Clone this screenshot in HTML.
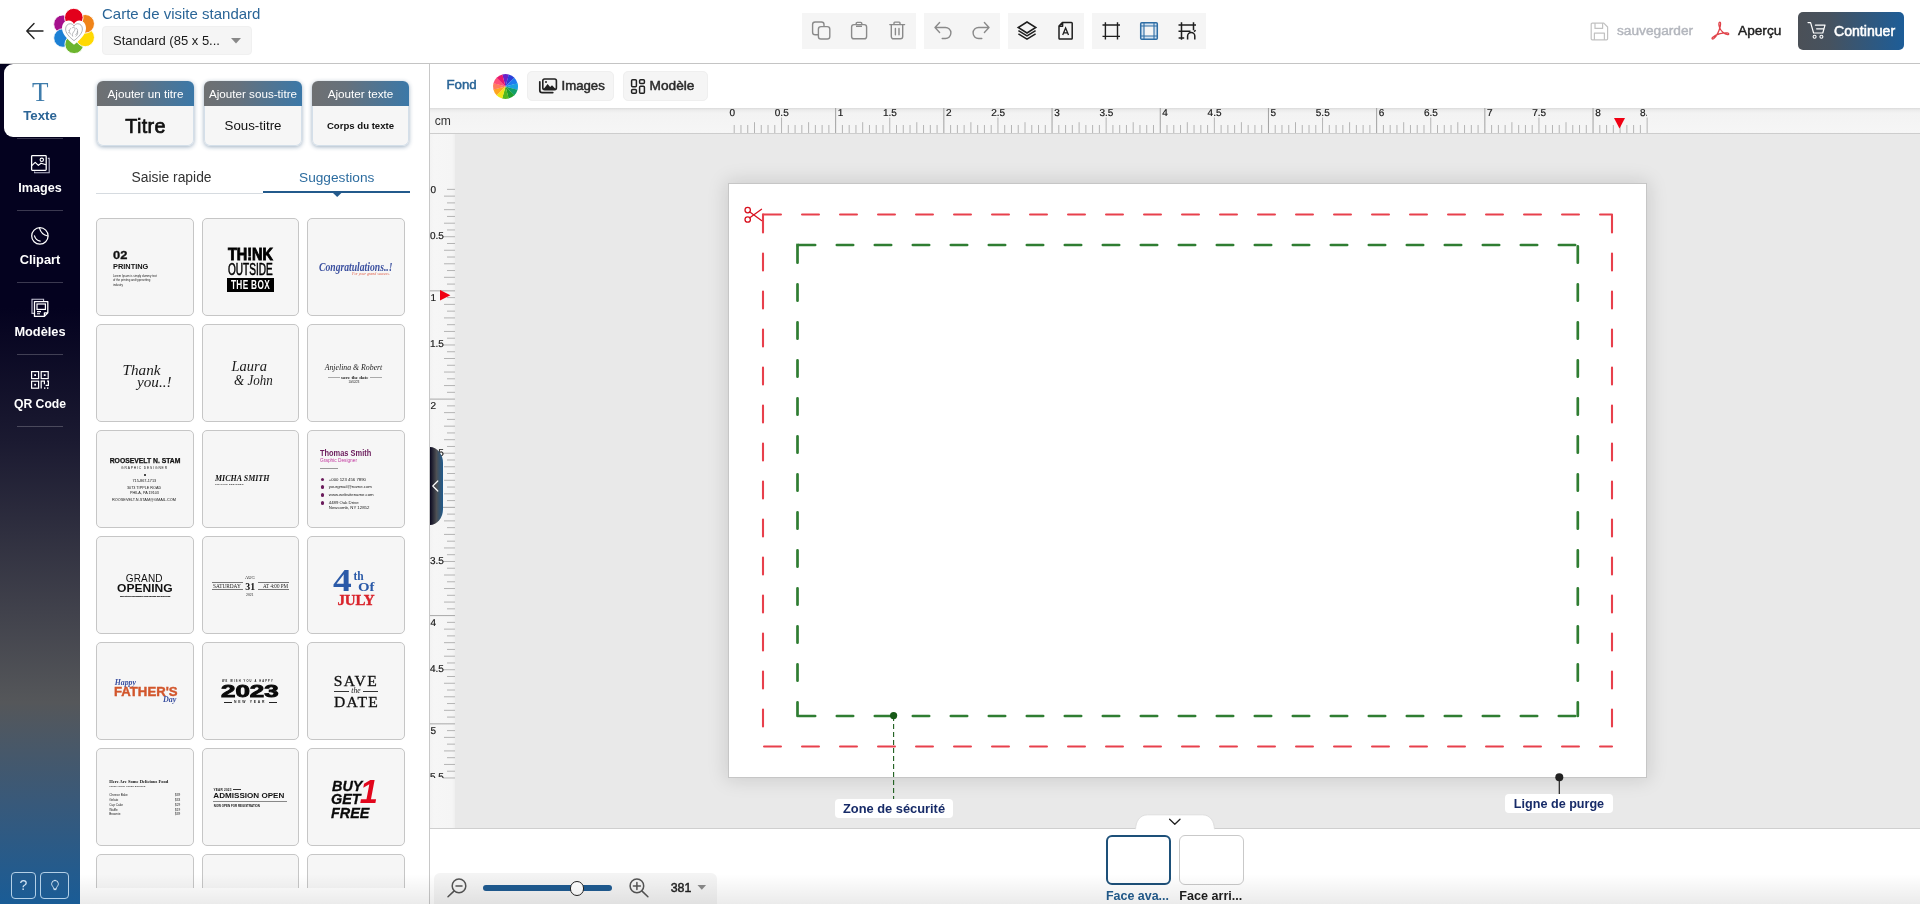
<!DOCTYPE html>
<html lang="fr"><head><meta charset="utf-8"><title>Carte de visite standard</title>
<style>
*{box-sizing:border-box;margin:0;padding:0}
html,body{width:1920px;height:904px;overflow:hidden;background:#fff}
body{font-family:"Liberation Sans",sans-serif;color:#222;position:relative;font-size:14px;will-change:transform}
.abs{position:absolute}
.t{position:absolute;white-space:nowrap;line-height:1}
svg{position:absolute;overflow:visible}
/* header */
#hdr{position:absolute;left:0;top:0;width:1920px;height:64px;background:#fff;border-bottom:1px solid #c4c4c4}
.grp{position:absolute;top:13px;height:36px;background:#f5f5f5}
/* sidebar */
#side{position:absolute;left:0;top:64px;width:80px;height:840px;background:linear-gradient(to bottom,#04021f 0%,#04021f 29%,#1b1a31 45%,#55575a 76%,#38597a 88%,#1a5c96 100%)}
#side .act{position:absolute;left:4px;top:0;width:76px;height:73px;background:#fff;border-radius:9px 0 0 9px}
#side .sep{position:absolute;left:17px;width:46px;height:1px;background:rgba(255,255,255,.22)}
#side .lbl{position:absolute;left:0;width:80px;text-align:center;color:#fff;font-weight:bold;font-size:13px;line-height:16px;white-space:nowrap}
.sq{position:absolute;top:808px;height:27px;border:1.200px solid rgba(205,228,246,.85);border-radius:4px;color:#fff}
/* panel */
#panel{position:absolute;left:80px;top:64px;width:350px;height:840px;background:#fff;border-right:1px solid #c8c8c8;overflow:hidden}
.card{position:absolute;top:17px;height:65px;border-radius:6px;background:#f6f6f6;box-shadow:0 1px 4px rgba(40,80,120,.45);overflow:hidden}
.card .h{position:absolute;left:0;top:0;right:0;height:25px;background:linear-gradient(to right,#6e7072 0%,#66717c 35%,#3b78a8 100%);color:#fff;font-size:12px;line-height:25px;text-align:center;white-space:nowrap}
.card .b{position:absolute;left:0;right:0;top:25px;bottom:0;text-align:center;white-space:nowrap;color:#111;border:1px solid #d4dfe9;border-top:none;border-radius:0 0 6px 6px}
.th{position:absolute;width:98px;height:98px;border:1px solid #c6c6c6;border-radius:5px;background:#f6f6f6;overflow:hidden}
.th .t{color:#111}
/* editor */
#tool{position:absolute;left:430px;top:64px;width:1490px;height:44px;background:#fff}
.btn{position:absolute;top:7px;height:30px;background:#f5f5f5;border:1px solid #efefef;border-radius:5px}
#hr{position:absolute;left:430px;top:108px;width:1490px;height:26px;background:linear-gradient(to bottom,#dadada 0,#ebebeb 2px,#f3f3f3 5px,#f6f6f6 100%);border-bottom:1px solid #cdcdcd;overflow:hidden}
#vr{position:absolute;left:430px;top:134px;width:25px;height:694px;background:linear-gradient(to right,#f3f3f3,#f6f6f6 4px,#f5f5f5 22px,#efefef 100%);overflow:hidden}
#cv{position:absolute;left:455px;top:134px;width:1465px;height:694px;background:#e9e9e9;overflow:hidden}
#bot{position:absolute;left:430px;top:828px;width:1490px;height:76px;background:#fff;border-top:1px solid #cfcfcf}
.rl{position:absolute;font-size:10px;line-height:10px;color:#1a1a1a;white-space:nowrap;-webkit-text-stroke:.2px #1a1a1a;text-rendering:geometricPrecision}
.tag{position:absolute;background:#fff;border-radius:4px;color:#172b68;font-weight:bold;font-size:13px;text-align:center;white-space:nowrap}
#fade{position:absolute;left:80px;top:874px;width:1840px;height:30px;background:linear-gradient(to bottom,rgba(0,0,0,0),rgba(0,0,0,.078));pointer-events:none}
</style></head><body>
<div id="hdr"><svg style="left:24px;top:20px" width="22" height="22" viewBox="0 0 22 22"><path d="M19 11H3.2M10 3.5L2.8 11l7.2 7.5" fill="none" stroke="#222" stroke-width="1.4" stroke-linecap="round" stroke-linejoin="round"/></svg><svg style="left:0;top:0" width="110" height="64" viewBox="0 0 110 64"><circle cx="63" cy="24.2" r="9.300" fill="#a5108c" stroke="#fff" stroke-width=".9"/><circle cx="63" cy="38" r="9.300" fill="#1c80d4" stroke="#fff" stroke-width=".9"/><circle cx="74.2" cy="44.3" r="9.300" fill="#6cb52d" stroke="#fff" stroke-width=".9"/><circle cx="85.2" cy="37.4" r="9.300" fill="#ffd902" stroke="#fff" stroke-width=".9"/><circle cx="85.2" cy="23.8" r="9.300" fill="#f08419" stroke="#fff" stroke-width=".9"/><circle cx="73.8" cy="17.6" r="9.300" fill="#e3001b" stroke="#fff" stroke-width=".9"/><path d="M74 44.700C66 38.600 62 33.200 62 28c0-4.400 3-7.500 6.600-7.500 2.400 0 4.400 1.400 5.400 3.600 1-2.200 3-3.600 5.400-3.600 3.600 0 6.600 3.100 6.600 7.500 0 5.200-4 10.600-12 16.700z" fill="#fff"/><g transform="translate(74 32.200) scale(.7) translate(-74 -32.600)"><path d="M74 44.700C66 38.600 62 33.200 62 28c0-4.400 3-7.500 6.600-7.500 2.400 0 4.400 1.400 5.400 3.600 1-2.200 3-3.600 5.400-3.600 3.600 0 6.600 3.100 6.600 7.500 0 5.200-4 10.600-12 16.700z" fill="none" stroke="#8f9398" stroke-width="1"/></g><path d="M70.600 28.400c-1.800 1.600-1.600 4.600.4 6.200M72.200 27.800c2-1.400 3.600.4 2.400 2.600s-3 3.200-2 5.800M76.200 28.200c2.200 1 2 4.400-.6 6.600M77.400 31.400c.8 1.600.2 3.400-1.400 4.800M68.800 30.400l.3.300M68.600 32.600l.3.200" fill="none" stroke="#8f9398" stroke-width=".65" stroke-linecap="round"/></svg><div class="t" id="ttl" style="left:102px;top:6px;font-size:15px;color:#2a6597">Carte de visite standard</div><div class="abs" style="left:102px;top:26px;width:150px;height:29px;background:#f5f5f5;border-radius:4px;border:1px solid #f0f0f0"></div><div class="t" id="std" style="left:113px;top:33.500px;font-size:13px;color:#1a1a1a">Standard (85 x 5...</div><svg style="left:231px;top:38px" width="10" height="6" viewBox="0 0 10 6"><path d="M0 0h10L5 5.600z" fill="#888"/></svg><div class="grp" style="left:802px;width:114px"></div><div class="grp" style="left:924px;width:76px"></div><div class="grp" style="left:1008px;width:76px"></div><div class="grp" style="left:1092px;width:114px"></div><svg style="left:809px;top:19px" width="24" height="24" viewBox="0 0 24 24"><rect x="3.600" y="3" width="11.400" height="12.800" rx="2.600" fill="none" stroke="#8a8a8a" stroke-width="1.400"/><rect x="9.400" y="7.600" width="11.400" height="12.400" rx="2.600" fill="#f5f5f5" stroke="#8a8a8a" stroke-width="1.400"/></svg><svg style="left:847px;top:19px" width="24" height="24" viewBox="0 0 24 24"><rect x="4.600" y="5.600" width="15" height="14.200" rx="2.400" fill="none" stroke="#8a8a8a" stroke-width="1.400"/><path d="M9.200 5.600v-1.200a1 1 0 0 1 1-1h3.600a1 1 0 0 1 1 1v1.200M9 7.300h6" fill="none" stroke="#8a8a8a" stroke-width="1.400"/></svg><svg style="left:885px;top:19px" width="24" height="24" viewBox="0 0 24 24"><path d="M4.800 5.600h14.800M9 5.400V3.900a.8.800 0 0 1 .8-.8h4.400a.8.800 0 0 1 .8.800v1.500M6.300 5.800v11.800a2.200 2.200 0 0 0 2.200 2.200h7a2.200 2.200 0 0 0 2.200-2.200V5.800M10.400 9.400v6.400M14 9.400v6.400" fill="none" stroke="#8a8a8a" stroke-width="1.400" stroke-linecap="round"/></svg><svg style="left:931px;top:19px" width="24" height="24" viewBox="0 0 24 24"><path d="M8.600 3.600L4 8.500l4.600 4.900M4.400 8.500h10a5.500 5.500 0 0 1 0 11h-3.200" fill="none" stroke="#8a8a8a" stroke-width="1.400" stroke-linecap="round" stroke-linejoin="round"/></svg><svg style="left:969px;top:19px" width="24" height="24" viewBox="0 0 24 24"><path d="M15.400 3.600L20 8.500l-4.600 4.900M19.600 8.500h-10a5.500 5.500 0 0 0 0 11h3.200" fill="none" stroke="#8a8a8a" stroke-width="1.400" stroke-linecap="round" stroke-linejoin="round"/></svg><svg style="left:1015px;top:19px" width="24" height="24" viewBox="0 0 24 24"><path d="M12 3l8.800 5.500L12 14 3.200 8.500z M3.400 11.600L12 16.900l8.600-5.300M3.400 14.900L12 20.200l8.600-5.300" fill="none" stroke="#1f1f1f" stroke-width="1.500" stroke-linejoin="miter"/></svg><svg style="left:1053px;top:19px" width="24" height="24" viewBox="0 0 24 24"><path d="M9.400 3.500h9a.8.800 0 0 1 .8.800v15a.8.800 0 0 1-.8.800H6.800a.8.800 0 0 1-.8-.8V7z M6.200 7.200h3.400V3.700" fill="none" stroke="#1f1f1f" stroke-width="1.500" stroke-linejoin="round"/><path d="M9.700 16l2.900-7 2.900 7M10.700 13.800h3.800" fill="none" stroke="#1f1f1f" stroke-width="1.300"/></svg><svg style="left:1099px;top:19px" width="24" height="24" viewBox="0 0 24 24"><path d="M6.400 3.200v17.400M18.500 3.200v17.400M3.500 6H21M3.500 17.400H21" fill="none" stroke="#1f1f1f" stroke-width="1.400"/></svg><svg style="left:1137px;top:19px" width="24" height="24" viewBox="0 0 24 24"><rect x="3.700" y="3.700" width="16.600" height="16.600" rx="1" fill="#d3e3f2" stroke="#2f6ea5" stroke-width="1.500"/><rect x="7" y="7" width="10" height="10" fill="#f5f5f5" stroke="none"/><path d="M7 3.700v16.600M17 3.700v16.600M3.700 7h16.600M3.700 17h16.600" fill="none" stroke="#2f6ea5" stroke-width="1.100"/></svg><svg style="left:1175px;top:19px" width="24" height="24" viewBox="0 0 24 24"><path d="M6.500 3.200v17.600M18.500 3.200v8M3.500 6H21M3.500 12.200h12M3.600 19h5.600" fill="none" stroke="#1f1f1f" stroke-width="1.500"/><path d="M12.600 20.600v-3.600a3.600 3.600 0 0 1 7.200 0v3.600M19 12.600l1.600-1.400" fill="none" stroke="#1f1f1f" stroke-width="1.500"/></svg><svg style="left:1590px;top:21.500px" width="19" height="19" viewBox="0 0 19 19"><path d="M1.200 2.200a1 1 0 0 1 1-1h11.600l3.800 3.800v11.800a1 1 0 0 1-1 1H2.200a1 1 0 0 1-1-1z M5 1.400v5h7.600v-5 M4.400 17.600v-6.400h10v6.400" fill="none" stroke="#c2c2c2" stroke-width="1.200" stroke-linejoin="round"/></svg><div class="t" id="sauv" style="left:1617px;top:24px;font-size:13.700px;-webkit-text-stroke:.45px #b3b6bd;color:#b3b6bd">sauvegarder</div><svg style="left:1710px;top:21px" width="20" height="19" viewBox="0 0 20 19"><path d="M9.800 1.200c-1.300.2-1.200 2.600-.2 5.400 1.200 3.300 4.800 6.600 8 7 1.600.2 1.600-1.400-.4-1.700-3.600-.5-10.600 1.200-14.400 4.400-1.600 1.400-.4 2.400 1 1.200 2.600-2.400 5.400-7.600 6.400-12 .6-2.800.4-4.400-.4-4.300z" fill="none" stroke="#e0434a" stroke-width="1.300" stroke-linejoin="round"/></svg><div class="t" id="aper" style="left:1738px;top:24px;font-size:13.700px;-webkit-text-stroke:.45px #1f1f1f;color:#1f1f1f">Aperçu</div><div class="abs" style="left:1798px;top:12px;width:106px;height:38px;border-radius:5px;background:linear-gradient(to right,#4b5057 0%,#46525f 30%,#1d5d98 100%)"></div><svg style="left:1807px;top:21px" width="20" height="19" viewBox="0 0 20 19"><path d="M1 1.600h2.600l3 10.400h9.200l2.200-7.800H8.400M9.600 7.800h7" fill="none" stroke="#fff" stroke-width="1.200" stroke-linejoin="round" stroke-linecap="round"/><circle cx="7.600" cy="15.800" r="1.500" fill="none" stroke="#fff" stroke-width="1.100"/><circle cx="14.400" cy="15.800" r="1.500" fill="none" stroke="#fff" stroke-width="1.100"/></svg><div class="t" id="cont" style="left:1834px;top:24px;font-size:14.100px;-webkit-text-stroke:.55px #fff;color:#fff">Continuer</div></div><div id="side"><div class="act"></div><div class="t" id="ticon" style="left:2.200px;width:76px;text-align:center;top:14.500px;font-family:'Liberation Serif',serif;font-size:27px;color:#3f7cab">T</div><div class="lbl" id="l0" style="font-size:13.300px;top:44px;color:#2c6596;left:4px;width:72px">Texte</div><div class="sep" style="top:74px"></div><div class="sep" style="top:146px"></div><div class="sep" style="top:218px"></div><div class="sep" style="top:290px"></div><div class="sep" style="top:362px"></div><svg style="left:28px;top:87.5px" width="24" height="24" viewBox="0 0 24 24"><path d="M6.600 19.600v1.200h14.600V6.400h-1.400" fill="none" stroke="#bdbdd0" stroke-width="1.100"/><rect x="3.600" y="3.700" width="14.600" height="14.600" rx=".8" fill="none" stroke="#fff" stroke-width="1.300"/><circle cx="13.800" cy="7.800" r="1.700" fill="none" stroke="#fff" stroke-width="1.100"/><path d="M3.800 13.600l3.400-3.200 3.200 3 2.600-2.200 5 1.600" fill="none" stroke="#fff" stroke-width="1.200" stroke-linejoin="round"/></svg><div class="lbl" id="l1" style="font-size:12.600px;top:115.7px">Images</div><svg style="left:28px;top:159.5px" width="24" height="24" viewBox="0 0 24 24"><circle cx="11.900" cy="11.900" r="8.200" fill="none" stroke="#fff" stroke-width="1.250"/><path d="M11.500 4.200Q13.200 10.800 19.800 12M6.500 11.800Q7.600 16 12.200 17.200" fill="none" stroke="#fff" stroke-width="1.200" stroke-linecap="round"/></svg><div class="lbl" id="l2" style="font-size:12.800px;top:187.7px">Clipart</div><svg style="left:28px;top:231.5px" width="24" height="24" viewBox="0 0 24 24"><path d="M6.200 17.400H4V3.200h11.600v2" fill="none" stroke="#c8c8d8" stroke-width="1.100"/><path d="M6.500 5.600h13.300v11.200l-3.400 3.600H6.500z M16.400 20.200v-3.400h3.200" fill="none" stroke="#fff" stroke-width="1.300" stroke-linejoin="round"/><rect x="9" y="8" width="8.400" height="5.400" fill="none" stroke="#fff" stroke-width="1.200"/><path d="M9 15.600h4M9 17.800h3" stroke="#fff" stroke-width="1.100"/></svg><div class="lbl" id="l3" style="font-size:12.800px;top:259.7px">Modèles</div><svg style="left:28px;top:303.5px" width="24" height="24" viewBox="0 0 24 24"><g fill="none" stroke="#fff" stroke-width="1.200"><rect x="3.600" y="3.600" width="7" height="7"/><rect x="13.200" y="3.600" width="7" height="7"/><rect x="3.600" y="13.200" width="7" height="7"/><path d="M13.200 20.400v-7.200h3.200v3M19 13.200h1.400v4.200h-2.800"/></g><g fill="#fff"><rect x="6.200" y="6.200" width="1.800" height="1.800"/><rect x="15.800" y="6.200" width="1.800" height="1.800"/><rect x="6.200" y="15.800" width="1.800" height="1.800"/><rect x="16" y="19.400" width="1.400" height="1.400"/><rect x="19" y="19.400" width="1.400" height="1.400"/></g></svg><div class="lbl" id="l4" style="font-size:12.200px;top:331.7px">QR Code</div><div class="sq" style="left:11px;width:25px"></div><div class="t" style="left:11px;width:25px;text-align:center;top:813.800px;font-size:14px;color:#d4e6f6">?</div><div class="sq" style="left:40px;width:29px"></div><svg style="left:47.500px;top:814px" width="14" height="14" viewBox="0 0 14 14"><path d="M7 2.400a3.400 3.400 0 0 0-3.400 3.400c0 1.400 1 2.300 1.700 3.600l.7 1.600h2l.7-1.600c.7-1.300 1.700-2.200 1.700-3.600A3.400 3.400 0 0 0 7 2.400z M6 11.600h2" fill="none" stroke="#d4e6f6" stroke-width="1" stroke-linejoin="round" stroke-linecap="round"/></svg></div><div id="panel"><div class="card" style="left:17px;width:97px"><div class="h" id="ch0" style="font-size:11.7px">Ajouter un titre</div><div class="b" style="font-size:19.800px;letter-spacing:.35px;-webkit-text-stroke:.7px #111;line-height:40.400px"><span id="cb0">Titre</span></div></div><div class="card" style="left:124px;width:98px"><div class="h" id="ch1" style="font-size:11.65px">Ajouter sous-titre</div><div class="b" style="font-size:13.300px;line-height:39px"><span id="cb1">Sous-titre</span></div></div><div class="card" style="left:232px;width:97px"><div class="h" id="ch2" style="font-size:11.7px">Ajouter texte</div><div class="b" style="font-size:9.600px;font-weight:bold;line-height:39px"><span id="cb2">Corps du texte</span></div></div><div class="t" id="tab0" style="left:51.5px;top:106.5px;font-size:13.85px;color:#333;">Saisie rapide</div><div class="t" id="tab1" style="left:219px;top:106.52px;font-size:13.7px;color:#2c6c9f;">Suggestions</div><div class="abs" style="left:16px;top:129px;width:167px;height:1px;background:#d6dbe0"></div><div class="abs" style="left:183px;top:127px;width:147px;height:2px;background:#235a8c"></div><svg style="left:253px;top:129px" width="8.400" height="4" viewBox="0 0 8.400 4"><path d="M0 0h8.400L4.200 3.900z" fill="#235a8c"/></svg><div class="abs" style="left:0;top:140px;width:349px;height:684px;overflow:hidden"><div class="th" style="left:16px;top:14px;width:98px"><div class="t" id="a02" style="left:16px;top:31.31px;font-size:11.5px;font-weight:bold;-webkit-text-stroke:.3px #111;transform-origin:0 0;transform:scaleX(1.12);">02</div><div class="t" id="aprint" style="left:16px;top:43.84px;font-size:7.4px;font-weight:bold;">PRINTING</div><div class="t" id="alor1" style="left:16px;top:55.83px;font-size:2.85px;color:#222;">Lorem Ipsum is simply dummy text</div><div class="t" id="alor2" style="left:16px;top:60.43px;font-size:2.85px;color:#222;">of the printing and typesetting</div><div class="t" style="left:16px;top:65.03px;font-size:2.85px;color:#222;">industry</div></div><div class="th" style="left:122px;top:14px;width:97px"><div class="t" id="bthink" style="left:25px;top:28.02px;font-size:16px;font-weight:bold;transform-origin:0 0;transform:scaleX(.9);-webkit-text-stroke:.9px #000;color:#000;">TH!NK</div><div class="t" id="bout" style="left:25px;top:43.42px;font-size:16px;transform-origin:0 0;transform:scaleX(.63);-webkit-text-stroke:.55px #000;color:#000;">OUTSIDE</div><div class="abs" style="left:24px;top:58.5px;width:47px;height:14.5px;background:#000"></div><div class="t" id="bbox" style="left:28px;top:59.98px;font-size:12.5px;color:#fff;font-weight:bold;transform-origin:0 0;transform:scaleX(.66);letter-spacing:.5px;">THE BOX</div></div><div class="th" style="left:227px;top:14px;width:98px"><div class="t" id="ccong" style="left:11px;top:40.93px;font-size:13.5px;font-family:'Liberation Serif',serif;font-style:italic;font-weight:bold;color:#3a4f9f;transform-origin:0 0;transform:scaleX(.715);">Congratulations..!</div><div class="t" id="ccs" style="left:44px;top:53.72px;font-size:3.9px;font-family:'Liberation Serif',serif;font-style:italic;color:#e0604a;">For your grand success.</div></div><div class="th" style="left:16px;top:120px;width:98px"><div class="t" id="dth" style="left:25.5px;top:37.13px;font-size:15.2px;font-family:'Liberation Serif',serif;font-style:italic;color:#1a1a1a;">Thank</div><div class="t" id="dyo" style="left:40px;top:48.93px;font-size:15.2px;font-family:'Liberation Serif',serif;font-style:italic;color:#1a1a1a;">you..!</div></div><div class="th" style="left:122px;top:120px;width:97px"><div class="t" id="ela" style="left:28.5px;top:33.96px;font-size:14.5px;font-family:'Liberation Serif',serif;font-style:italic;color:#1a1a1a;">Laura</div><div class="t" id="ejo" style="left:30.5px;top:48.46px;font-size:14.5px;font-family:'Liberation Serif',serif;font-style:italic;color:#1a1a1a;transform-origin:0 0;transform:scaleX(.9);">&amp; John</div></div><div class="th" style="left:227px;top:120px;width:98px"><div class="t" id="fan" style="left:16.7px;top:39.23px;font-size:7.8px;font-family:'Liberation Serif',serif;font-style:italic;color:#222;">Anjelina &amp; Robert</div><div class="abs" style="left:20px;top:52.3px;width:11.5px;height:0.5px;background:#aaa"></div><div class="abs" style="left:62px;top:52.3px;width:11.5px;height:0.5px;background:#aaa"></div><div class="t" id="fsv" style="left:33px;top:49.82px;font-size:5px;font-family:'Liberation Serif',serif;font-weight:bold;color:#222;">save the date</div><div class="t" style="left:40.5px;top:55.84px;font-size:2.8px;color:#222;">10/02/23</div></div><div class="th" style="left:16px;top:226px;width:98px"><div class="t" id="gro" style="left:12.7px;top:27.32px;font-size:6.8px;font-weight:bold;-webkit-text-stroke:.25px #111;">ROOSEVELT N. STAM</div><div class="t" id="ggd" style="left:24px;top:35.77px;font-size:3.3px;letter-spacing:.86px;color:#161616;">GRAPHIC DESIGNER</div><div class="abs" style="left:47px;top:42.5px;width:2px;height:2px;background:#111;border-radius:50%"></div><div class="t" id="gph" style="left:35.5px;top:49.11px;font-size:3.8px;color:#161616;">715-867-1713</div><div class="t" id="gad" style="left:30px;top:55.51px;font-size:3.75px;color:#161616;">3073 TIPPLE ROAD</div><div class="t" id="gci" style="left:33px;top:61.01px;font-size:3.75px;color:#161616;">PHILA, PA 19103</div><div class="t" id="gem" style="left:15px;top:67.5px;font-size:3.85px;color:#161616;">ROOSEVELT.N.STAM@GMAIL.COM</div></div><div class="th" style="left:122px;top:226px;width:97px"><div class="t" id="hmi" style="left:12px;top:44.1px;font-size:8px;font-family:'Liberation Serif',serif;font-weight:bold;font-style:italic;">MICHA SMITH</div><div class="t" id="hgd" style="left:12px;top:52.69px;font-size:2.4px;font-weight:bold;letter-spacing:.28px;color:#161616;">GRAPHIC DESIGNER</div></div><div class="th" style="left:227px;top:226px;width:98px"><div class="t" id="ith" style="left:12px;top:18.18px;font-size:8.6px;font-weight:bold;color:#6b1c5c;transform-origin:0 0;transform:scaleX(.865);">Thomas Smith</div><div class="t" id="igd" style="left:12px;top:28.18px;font-size:4.75px;color:#c2399f;">Graphic Designer</div><div class="abs" style="left:12px;top:37.2px;width:18px;height:0.6px;background:#999"></div><div class="t" style="left:20.8px;top:46.54px;font-size:4.3px;color:#161616;">+000 123 456 7890</div><div class="t" style="left:20.8px;top:54.24px;font-size:4.3px;color:#161616;">yourgmail@name.com</div><div class="t" style="left:20.8px;top:62.24px;font-size:4.3px;color:#161616;">www.websitename.com</div><div class="t" style="left:20.8px;top:70.24px;font-size:4.3px;color:#161616;">4489 Oak Drive</div><div class="t" style="left:20.8px;top:75.44px;font-size:4.3px;color:#161616;">Newcomb, NY 12852</div><div class="abs" style="left:12.5px;top:46.6px;width:3.4px;height:3.4px;background:#6b1c5c;border-radius:50%"></div><div class="abs" style="left:12.5px;top:54.4px;width:3.4px;height:3.4px;background:#6b1c5c;border-radius:50%"></div><div class="abs" style="left:12.5px;top:62.3px;width:3.4px;height:3.4px;background:#6b1c5c;border-radius:50%"></div><div class="abs" style="left:12.5px;top:70.3px;width:3.4px;height:3.4px;background:#6b1c5c;border-radius:50%"></div></div><div class="th" style="left:16px;top:332px;width:98px"><div class="t" id="jgr" style="left:28.8px;top:37.1px;font-size:10px;letter-spacing:.15px;">GRAND</div><div class="t" id="jop" style="left:19.7px;top:45.49px;font-size:11.6px;font-weight:bold;transform-origin:0 0;transform:scaleX(1.04);">OPENING</div><div class="t" id="jwe" style="left:23px;top:58.39px;font-size:2.35px;font-weight:bold;-webkit-text-stroke:.15px #111;">WE HAVE CROSSED ONE MORE MILESTONE</div></div><div class="th" style="left:122px;top:332px;width:97px"><div class="t" id="kau" style="left:42px;top:39.21px;font-size:4.5px;font-family:'Liberation Serif',serif;color:#161616;">AUG</div><div class="t" id="k31" style="left:42.3px;top:44.68px;font-size:9.8px;font-family:'Liberation Serif',serif;font-weight:bold;">31</div><div class="t" style="left:43px;top:56.53px;font-size:3.8px;font-family:'Liberation Serif',serif;color:#161616;">2021</div><div class="abs" style="left:8.5px;top:45.3px;width:31.5px;height:0.5px;background:#777"></div><div class="abs" style="left:8.5px;top:52.4px;width:31.5px;height:0.5px;background:#777"></div><div class="abs" style="left:55px;top:45.3px;width:31px;height:0.5px;background:#777"></div><div class="abs" style="left:55px;top:52.4px;width:31px;height:0.5px;background:#777"></div><div class="t" id="ksa" style="left:10px;top:46.67px;font-size:5.3px;font-family:'Liberation Serif',serif;color:#222;">SATURDAY</div><div class="t" id="kat" style="left:60px;top:46.7px;font-size:5.1px;font-family:'Liberation Serif',serif;color:#222;">AT 4:00 PM</div></div><div class="th" style="left:227px;top:332px;width:98px"><div class="t" id="l4" style="left:25.2px;top:26.98px;font-size:32px;font-family:'Liberation Serif',serif;font-weight:bold;color:#2b5aa8;transform-origin:0 0;transform:scaleX(1.17);">4</div><div class="t" id="lth" style="left:45.5px;top:33.58px;font-size:11.5px;font-family:'Liberation Serif',serif;font-weight:bold;color:#2b5aa8;">th</div><div class="t" id="lof" style="left:50px;top:42.83px;font-size:13.5px;font-family:'Liberation Serif',serif;font-weight:bold;color:#2b5aa8;transform-origin:0 0;transform:scaleX(1.1);">Of</div><div class="t" id="lju" style="left:29.5px;top:55.57px;font-size:15px;font-family:'Liberation Serif',serif;font-weight:bold;color:#d9232b;letter-spacing:-.2px;-webkit-text-stroke:.4px #d9232b;">JULY</div></div><div class="th" style="left:16px;top:438px;width:98px"><div class="t" id="mha" style="left:17.7px;top:36.13px;font-size:7.8px;font-family:'Liberation Serif',serif;font-style:italic;font-weight:bold;color:#3a4fa0;">Happy</div><div class="t" id="mfa" style="left:17.2px;top:43.4px;font-size:12.3px;font-weight:bold;color:#d2562c;-webkit-text-stroke:.4px #d2562c;transform-origin:0 0;transform:scaleX(1.07);">FATHER'S</div><div class="t" id="mda" style="left:66px;top:53.1px;font-size:8px;font-family:'Liberation Serif',serif;font-style:italic;font-weight:bold;color:#3a4fa0;">Day</div></div><div class="th" style="left:122px;top:438px;width:97px"><div class="t" id="nwe" style="left:19px;top:38.26px;font-size:2.6px;font-weight:bold;letter-spacing:1.150px;color:#222;">WE WISH YOU A HAPPY</div><div class="t" id="n23" style="left:17.8px;top:39.94px;font-size:17.4px;font-weight:bold;color:#0a0a0a;-webkit-text-stroke:.9px #0a0a0a;transform-origin:0 0;transform:scaleX(1.49);">2023</div><div class="t" id="nny" style="left:31px;top:57.76px;font-size:3.4px;font-weight:bold;letter-spacing:1.750px;color:#222;">NEW YEAR</div><div class="abs" style="left:21px;top:58.6px;width:7.5px;height:0.9px;background:#222"></div><div class="abs" style="left:66px;top:58.6px;width:7.5px;height:0.9px;background:#222"></div></div><div class="th" style="left:227px;top:438px;width:98px"><div class="t" id="osa" style="left:25.7px;top:29.76px;font-size:15.6px;font-family:'Liberation Serif',serif;letter-spacing:1.500px;-webkit-text-stroke:.3px #111;">SAVE</div><div class="abs" style="left:26px;top:48.1px;width:15px;height:0.6px;background:#333"></div><div class="abs" style="left:55.3px;top:48.1px;width:15px;height:0.6px;background:#333"></div><div class="t" id="oth" style="left:43.3px;top:44.28px;font-size:7.5px;font-family:'Liberation Serif',serif;font-style:italic;">the</div><div class="t" id="oda" style="left:26px;top:50.56px;font-size:15.6px;font-family:'Liberation Serif',serif;letter-spacing:1.300px;-webkit-text-stroke:.3px #111;">DATE</div></div><div class="th" style="left:16px;top:544px;width:98px"><div class="t" id="phe" style="left:12.2px;top:31.4px;font-size:4.55px;font-family:'Liberation Serif',serif;font-weight:bold;">Here Are Some Delicious Food</div><div class="t" id="plo" style="left:12.2px;top:36.3px;font-size:2.3px;color:#161616;">LOREM IPSUM LOREM BOLLERS.</div><div class="t" style="left:12.2px;top:45.3px;font-size:3.1px;color:#222;">Cheese Bake</div><div class="t" style="left:78px;top:45.3px;font-size:3.1px;color:#222;">$39</div><div class="t" style="left:12.2px;top:50.05px;font-size:3.1px;color:#222;">Gelato</div><div class="t" style="left:78px;top:50.05px;font-size:3.1px;color:#222;">$33</div><div class="t" style="left:12.2px;top:54.8px;font-size:3.1px;color:#222;">Cup Cake</div><div class="t" style="left:78px;top:54.8px;font-size:3.1px;color:#222;">$29</div><div class="t" style="left:12.2px;top:59.55px;font-size:3.1px;color:#222;">Waffle</div><div class="t" style="left:78px;top:59.55px;font-size:3.1px;color:#222;">$19</div><div class="t" style="left:12.2px;top:64.3px;font-size:3.1px;color:#222;">Brownie</div><div class="t" style="left:78px;top:64.3px;font-size:3.1px;color:#222;">$39</div></div><div class="th" style="left:122px;top:544px;width:97px"><div class="t" id="qye" style="left:10.5px;top:39.6px;font-size:3.1px;font-weight:bold;letter-spacing:.2px;">YEAR 2023</div><div class="abs" style="left:30px;top:40.2px;width:7.5px;height:0.5px;background:#333"></div><div class="t" id="qad" style="left:10.3px;top:43.35px;font-size:8.1px;font-weight:bold;">ADMISSION OPEN</div><div class="abs" style="left:10px;top:52.3px;width:74px;height:0.6px;background:#888"></div><div class="t" id="qno" style="left:10.8px;top:55.92px;font-size:2.95px;font-weight:bold;">NOW OPEN FOR REGISTRATION</div></div><div class="th" style="left:227px;top:544px;width:98px"><div class="t" id="rbu" style="left:24.3px;top:28.65px;font-size:15px;font-weight:bold;font-style:italic;color:#0a0a0a;-webkit-text-stroke:.3px #0a0a0a;transform-origin:0 0;transform:scaleX(.96);">BUY</div><div class="t" id="rge" style="left:23.3px;top:42.25px;font-size:15px;font-weight:bold;font-style:italic;color:#0a0a0a;-webkit-text-stroke:.3px #0a0a0a;transform-origin:0 0;transform:scaleX(.96);">GET</div><div class="t" id="rfr" style="left:22.5px;top:55.85px;font-size:15px;font-weight:bold;font-style:italic;color:#0a0a0a;-webkit-text-stroke:.3px #0a0a0a;transform-origin:0 0;transform:scaleX(.96);">FREE</div><div class="t" id="r1" style="left:51.8px;top:27.27px;font-size:32.5px;font-weight:bold;font-style:italic;color:#e2061c;">1</div></div><div class="th" style="left:16px;top:650px;width:98px"></div><div class="th" style="left:122px;top:650px;width:97px"></div><div class="th" style="left:227px;top:650px;width:98px"></div></div></div><div id="tool"><div class="t" id="fond" style="left:16.4px;top:14.27px;font-size:13.3px;-webkit-text-stroke:.5px #2a6597;color:#2a6597;">Fond</div><svg style="left:63px;top:9.800px" width="25" height="25" viewBox="-12.500 -12.500 25 25"><path d="M0 0L-3.235 -12.074A12.500 12.500 0 0 1 3.404 -12.028Z" fill="#6a22c8"/><path d="M0 0L3.235 -12.074A12.500 12.500 0 0 1 8.961 -8.715Z" fill="#2a3fd8"/><path d="M0 0L8.839 -8.839A12.500 12.500 0 0 1 12.118 -3.066Z" fill="#1d7bf0"/><path d="M0 0L12.074 -3.235A12.500 12.500 0 0 1 12.028 3.404Z" fill="#1aa0e0"/><path d="M0 0L12.074 3.235A12.500 12.500 0 0 1 8.715 8.961Z" fill="#12a068"/><path d="M0 0L8.839 8.839A12.500 12.500 0 0 1 3.066 12.118Z" fill="#1f9e2e"/><path d="M0 0L3.235 12.074A12.500 12.500 0 0 1 -3.404 12.028Z" fill="#55b81e"/><path d="M0 0L-3.235 12.074A12.500 12.500 0 0 1 -8.961 8.715Z" fill="#f2e416"/><path d="M0 0L-8.839 8.839A12.500 12.500 0 0 1 -12.118 3.066Z" fill="#ffa51e"/><path d="M0 0L-12.074 3.235A12.500 12.500 0 0 1 -12.028 -3.404Z" fill="#ff7d5e"/><path d="M0 0L-12.074 -3.235A12.500 12.500 0 0 1 -8.715 -8.961Z" fill="#ff4f76"/><path d="M0 0L-8.839 -8.839A12.500 12.500 0 0 1 -3.066 -12.118Z" fill="#e8176e"/></svg><div class="btn" style="left:96.500px;width:87px"></div><svg style="left:108px;top:13px" width="20" height="18" viewBox="0 0 20 18"><path d="M1.800 4.800v8.400a2.400 2.400 0 0 0 2.400 2.400h10.600" fill="none" stroke="#222" stroke-width="1.700" stroke-linecap="round"/><rect x="4.800" y="2" width="13.600" height="10.600" rx="1.800" fill="none" stroke="#222" stroke-width="1.600"/><path d="M5.600 12l4-5 2.600 3 1.800-1.800 3.600 3.800z" fill="#222"/><circle cx="8" cy="5" r="1" fill="#222"/></svg><div class="t" id="timg" style="left:131.5px;top:14.58px;font-size:13.2px;-webkit-text-stroke:.5px #2b2b2b;color:#2b2b2b;">Images</div><div class="btn" style="left:192.500px;width:85px"></div><svg style="left:200px;top:13.500px" width="16" height="17" viewBox="0 0 16 17"><g fill="none" stroke="#222" stroke-width="1.500"><rect x="1.600" y="1.800" width="4.800" height="7" rx="1"/><rect x="9.600" y="1.800" width="4.800" height="3.600" rx="1"/><rect x="1.600" y="11.600" width="4.800" height="3.600" rx="1"/><rect x="9.600" y="8.200" width="4.800" height="7" rx="1"/></g></svg><div class="t" id="tmod" style="left:219.5px;top:14.52px;font-size:13.7px;-webkit-text-stroke:.5px #2b2b2b;color:#2b2b2b;">Modèle</div></div><div id="hr"><div class="t" id="cm" style="left:4.7px;top:-109.57px;font-size:12.1px;color:#333;top:6.700px;">cm</div><svg style="left:0;top:0" width="1490" height="26" viewBox="430 108 1490 26"><g stroke="#b4b4b4" stroke-width="1"><path d="M734.21 125V134" stroke="#b4b4b4"/><path d="M740.98 125V134" stroke="#b4b4b4"/><path d="M747.74 125V134" stroke="#b4b4b4"/><path d="M754.50 122.2V134" stroke="#b4b4b4"/><path d="M761.26 125V134" stroke="#b4b4b4"/><path d="M768.03 125V134" stroke="#b4b4b4"/><path d="M774.79 125V134" stroke="#b4b4b4"/><path d="M781.55 117.5V134" stroke="#b4b4b4"/><path d="M788.31 125V134" stroke="#b4b4b4"/><path d="M795.08 125V134" stroke="#b4b4b4"/><path d="M801.84 125V134" stroke="#b4b4b4"/><path d="M808.60 122.2V134" stroke="#b4b4b4"/><path d="M815.36 125V134" stroke="#b4b4b4"/><path d="M822.12 125V134" stroke="#b4b4b4"/><path d="M828.89 125V134" stroke="#b4b4b4"/><path d="M835.65 108V134" stroke="#a0a0a0"/><path d="M842.41 125V134" stroke="#b4b4b4"/><path d="M849.18 125V134" stroke="#b4b4b4"/><path d="M855.94 125V134" stroke="#b4b4b4"/><path d="M862.70 122.2V134" stroke="#b4b4b4"/><path d="M869.46 125V134" stroke="#b4b4b4"/><path d="M876.23 125V134" stroke="#b4b4b4"/><path d="M882.99 125V134" stroke="#b4b4b4"/><path d="M889.75 117.5V134" stroke="#b4b4b4"/><path d="M896.51 125V134" stroke="#b4b4b4"/><path d="M903.28 125V134" stroke="#b4b4b4"/><path d="M910.04 125V134" stroke="#b4b4b4"/><path d="M916.80 122.2V134" stroke="#b4b4b4"/><path d="M923.56 125V134" stroke="#b4b4b4"/><path d="M930.33 125V134" stroke="#b4b4b4"/><path d="M937.09 125V134" stroke="#b4b4b4"/><path d="M943.85 108V134" stroke="#a0a0a0"/><path d="M950.61 125V134" stroke="#b4b4b4"/><path d="M957.38 125V134" stroke="#b4b4b4"/><path d="M964.14 125V134" stroke="#b4b4b4"/><path d="M970.90 122.2V134" stroke="#b4b4b4"/><path d="M977.66 125V134" stroke="#b4b4b4"/><path d="M984.43 125V134" stroke="#b4b4b4"/><path d="M991.19 125V134" stroke="#b4b4b4"/><path d="M997.95 117.5V134" stroke="#b4b4b4"/><path d="M1004.71 125V134" stroke="#b4b4b4"/><path d="M1011.48 125V134" stroke="#b4b4b4"/><path d="M1018.24 125V134" stroke="#b4b4b4"/><path d="M1025.00 122.2V134" stroke="#b4b4b4"/><path d="M1031.76 125V134" stroke="#b4b4b4"/><path d="M1038.53 125V134" stroke="#b4b4b4"/><path d="M1045.29 125V134" stroke="#b4b4b4"/><path d="M1052.05 108V134" stroke="#a0a0a0"/><path d="M1058.81 125V134" stroke="#b4b4b4"/><path d="M1065.58 125V134" stroke="#b4b4b4"/><path d="M1072.34 125V134" stroke="#b4b4b4"/><path d="M1079.10 122.2V134" stroke="#b4b4b4"/><path d="M1085.86 125V134" stroke="#b4b4b4"/><path d="M1092.62 125V134" stroke="#b4b4b4"/><path d="M1099.39 125V134" stroke="#b4b4b4"/><path d="M1106.15 117.5V134" stroke="#b4b4b4"/><path d="M1112.91 125V134" stroke="#b4b4b4"/><path d="M1119.68 125V134" stroke="#b4b4b4"/><path d="M1126.44 125V134" stroke="#b4b4b4"/><path d="M1133.20 122.2V134" stroke="#b4b4b4"/><path d="M1139.96 125V134" stroke="#b4b4b4"/><path d="M1146.73 125V134" stroke="#b4b4b4"/><path d="M1153.49 125V134" stroke="#b4b4b4"/><path d="M1160.25 108V134" stroke="#a0a0a0"/><path d="M1167.01 125V134" stroke="#b4b4b4"/><path d="M1173.78 125V134" stroke="#b4b4b4"/><path d="M1180.54 125V134" stroke="#b4b4b4"/><path d="M1187.30 122.2V134" stroke="#b4b4b4"/><path d="M1194.06 125V134" stroke="#b4b4b4"/><path d="M1200.83 125V134" stroke="#b4b4b4"/><path d="M1207.59 125V134" stroke="#b4b4b4"/><path d="M1214.35 117.5V134" stroke="#b4b4b4"/><path d="M1221.11 125V134" stroke="#b4b4b4"/><path d="M1227.88 125V134" stroke="#b4b4b4"/><path d="M1234.64 125V134" stroke="#b4b4b4"/><path d="M1241.40 122.2V134" stroke="#b4b4b4"/><path d="M1248.16 125V134" stroke="#b4b4b4"/><path d="M1254.93 125V134" stroke="#b4b4b4"/><path d="M1261.69 125V134" stroke="#b4b4b4"/><path d="M1268.45 108V134" stroke="#a0a0a0"/><path d="M1275.21 125V134" stroke="#b4b4b4"/><path d="M1281.97 125V134" stroke="#b4b4b4"/><path d="M1288.74 125V134" stroke="#b4b4b4"/><path d="M1295.50 122.2V134" stroke="#b4b4b4"/><path d="M1302.26 125V134" stroke="#b4b4b4"/><path d="M1309.03 125V134" stroke="#b4b4b4"/><path d="M1315.79 125V134" stroke="#b4b4b4"/><path d="M1322.55 117.5V134" stroke="#b4b4b4"/><path d="M1329.31 125V134" stroke="#b4b4b4"/><path d="M1336.08 125V134" stroke="#b4b4b4"/><path d="M1342.84 125V134" stroke="#b4b4b4"/><path d="M1349.60 122.2V134" stroke="#b4b4b4"/><path d="M1356.36 125V134" stroke="#b4b4b4"/><path d="M1363.12 125V134" stroke="#b4b4b4"/><path d="M1369.89 125V134" stroke="#b4b4b4"/><path d="M1376.65 108V134" stroke="#a0a0a0"/><path d="M1383.41 125V134" stroke="#b4b4b4"/><path d="M1390.18 125V134" stroke="#b4b4b4"/><path d="M1396.94 125V134" stroke="#b4b4b4"/><path d="M1403.70 122.2V134" stroke="#b4b4b4"/><path d="M1410.46 125V134" stroke="#b4b4b4"/><path d="M1417.22 125V134" stroke="#b4b4b4"/><path d="M1423.99 125V134" stroke="#b4b4b4"/><path d="M1430.75 117.5V134" stroke="#b4b4b4"/><path d="M1437.51 125V134" stroke="#b4b4b4"/><path d="M1444.28 125V134" stroke="#b4b4b4"/><path d="M1451.04 125V134" stroke="#b4b4b4"/><path d="M1457.80 122.2V134" stroke="#b4b4b4"/><path d="M1464.56 125V134" stroke="#b4b4b4"/><path d="M1471.33 125V134" stroke="#b4b4b4"/><path d="M1478.09 125V134" stroke="#b4b4b4"/><path d="M1484.85 108V134" stroke="#a0a0a0"/><path d="M1491.61 125V134" stroke="#b4b4b4"/><path d="M1498.38 125V134" stroke="#b4b4b4"/><path d="M1505.14 125V134" stroke="#b4b4b4"/><path d="M1511.90 122.2V134" stroke="#b4b4b4"/><path d="M1518.66 125V134" stroke="#b4b4b4"/><path d="M1525.43 125V134" stroke="#b4b4b4"/><path d="M1532.19 125V134" stroke="#b4b4b4"/><path d="M1538.95 117.5V134" stroke="#b4b4b4"/><path d="M1545.71 125V134" stroke="#b4b4b4"/><path d="M1552.47 125V134" stroke="#b4b4b4"/><path d="M1559.24 125V134" stroke="#b4b4b4"/><path d="M1566.00 122.2V134" stroke="#b4b4b4"/><path d="M1572.76 125V134" stroke="#b4b4b4"/><path d="M1579.53 125V134" stroke="#b4b4b4"/><path d="M1586.29 125V134" stroke="#b4b4b4"/><path d="M1593.05 108V134" stroke="#a0a0a0"/><path d="M1599.81 125V134" stroke="#b4b4b4"/><path d="M1606.58 125V134" stroke="#b4b4b4"/><path d="M1613.34 125V134" stroke="#b4b4b4"/><path d="M1620.10 122.2V134" stroke="#b4b4b4"/><path d="M1626.86 125V134" stroke="#b4b4b4"/><path d="M1633.62 125V134" stroke="#b4b4b4"/><path d="M1640.39 125V134" stroke="#b4b4b4"/><path d="M1647.15 117.5V134" stroke="#b4b4b4"/></g></svg><div class="rl" style="left:299.55px;top:1px">0</div><div class="rl" style="left:341.75px;top:1px;width:20px;text-align:center">0.5</div><div class="rl" style="left:407.75px;top:1px">1</div><div class="rl" style="left:449.95px;top:1px;width:20px;text-align:center">1.5</div><div class="rl" style="left:515.95px;top:1px">2</div><div class="rl" style="left:558.15px;top:1px;width:20px;text-align:center">2.5</div><div class="rl" style="left:624.15px;top:1px">3</div><div class="rl" style="left:666.35px;top:1px;width:20px;text-align:center">3.5</div><div class="rl" style="left:732.35px;top:1px">4</div><div class="rl" style="left:774.55px;top:1px;width:20px;text-align:center">4.5</div><div class="rl" style="left:840.55px;top:1px">5</div><div class="rl" style="left:882.75px;top:1px;width:20px;text-align:center">5.5</div><div class="rl" style="left:948.75px;top:1px">6</div><div class="rl" style="left:990.95px;top:1px;width:20px;text-align:center">6.5</div><div class="rl" style="left:1056.95px;top:1px">7</div><div class="rl" style="left:1099.15px;top:1px;width:20px;text-align:center">7.5</div><div class="rl" style="left:1165.15px;top:1px">8</div><div class="abs" style="left:1209.95px;top:0;width:7.2px;height:12px;overflow:hidden"><div class="rl" style="left:0;top:1px">8.5</div></div><svg style="left:1183.5px;top:9.800px" width="11" height="11" viewBox="0 0 11 11"><path d="M0 0h11L5.500 10.400z" fill="#f00013"/></svg></div><div id="vr"><svg style="left:0;top:0" width="25" height="694" viewBox="430 134 25 694"><g stroke="#b4b4b4" stroke-width="1"><path d="M447 189.37H455" stroke="#b4b4b4"/><path d="M444 196.13H455" stroke="#b4b4b4"/><path d="M447 202.90H455" stroke="#b4b4b4"/><path d="M444 209.66H455" stroke="#b4b4b4"/><path d="M447 216.43H455" stroke="#b4b4b4"/><path d="M444 223.19H455" stroke="#b4b4b4"/><path d="M447 229.96H455" stroke="#b4b4b4"/><path d="M443 236.72H455" stroke="#b4b4b4"/><path d="M447 243.49H455" stroke="#b4b4b4"/><path d="M444 250.26H455" stroke="#b4b4b4"/><path d="M447 257.02H455" stroke="#b4b4b4"/><path d="M444 263.79H455" stroke="#b4b4b4"/><path d="M447 270.55H455" stroke="#b4b4b4"/><path d="M444 277.32H455" stroke="#b4b4b4"/><path d="M447 284.08H455" stroke="#b4b4b4"/><path d="M430 290.85H455" stroke="#a8a8a8"/><path d="M447 297.62H455" stroke="#b4b4b4"/><path d="M444 304.38H455" stroke="#b4b4b4"/><path d="M447 311.15H455" stroke="#b4b4b4"/><path d="M444 317.91H455" stroke="#b4b4b4"/><path d="M447 324.68H455" stroke="#b4b4b4"/><path d="M444 331.44H455" stroke="#b4b4b4"/><path d="M447 338.21H455" stroke="#b4b4b4"/><path d="M443 344.98H455" stroke="#b4b4b4"/><path d="M447 351.74H455" stroke="#b4b4b4"/><path d="M444 358.51H455" stroke="#b4b4b4"/><path d="M447 365.27H455" stroke="#b4b4b4"/><path d="M444 372.04H455" stroke="#b4b4b4"/><path d="M447 378.80H455" stroke="#b4b4b4"/><path d="M444 385.57H455" stroke="#b4b4b4"/><path d="M447 392.33H455" stroke="#b4b4b4"/><path d="M430 399.10H455" stroke="#a8a8a8"/><path d="M447 405.87H455" stroke="#b4b4b4"/><path d="M444 412.63H455" stroke="#b4b4b4"/><path d="M447 419.40H455" stroke="#b4b4b4"/><path d="M444 426.16H455" stroke="#b4b4b4"/><path d="M447 432.93H455" stroke="#b4b4b4"/><path d="M444 439.69H455" stroke="#b4b4b4"/><path d="M447 446.46H455" stroke="#b4b4b4"/><path d="M443 453.23H455" stroke="#b4b4b4"/><path d="M447 459.99H455" stroke="#b4b4b4"/><path d="M444 466.76H455" stroke="#b4b4b4"/><path d="M447 473.52H455" stroke="#b4b4b4"/><path d="M444 480.29H455" stroke="#b4b4b4"/><path d="M447 487.05H455" stroke="#b4b4b4"/><path d="M444 493.82H455" stroke="#b4b4b4"/><path d="M447 500.58H455" stroke="#b4b4b4"/><path d="M430 507.35H455" stroke="#a8a8a8"/><path d="M447 514.12H455" stroke="#b4b4b4"/><path d="M444 520.88H455" stroke="#b4b4b4"/><path d="M447 527.65H455" stroke="#b4b4b4"/><path d="M444 534.41H455" stroke="#b4b4b4"/><path d="M447 541.18H455" stroke="#b4b4b4"/><path d="M444 547.94H455" stroke="#b4b4b4"/><path d="M447 554.71H455" stroke="#b4b4b4"/><path d="M443 561.48H455" stroke="#b4b4b4"/><path d="M447 568.24H455" stroke="#b4b4b4"/><path d="M444 575.01H455" stroke="#b4b4b4"/><path d="M447 581.77H455" stroke="#b4b4b4"/><path d="M444 588.54H455" stroke="#b4b4b4"/><path d="M447 595.30H455" stroke="#b4b4b4"/><path d="M444 602.07H455" stroke="#b4b4b4"/><path d="M447 608.83H455" stroke="#b4b4b4"/><path d="M430 615.60H455" stroke="#a8a8a8"/><path d="M447 622.37H455" stroke="#b4b4b4"/><path d="M444 629.13H455" stroke="#b4b4b4"/><path d="M447 635.90H455" stroke="#b4b4b4"/><path d="M444 642.66H455" stroke="#b4b4b4"/><path d="M447 649.43H455" stroke="#b4b4b4"/><path d="M444 656.19H455" stroke="#b4b4b4"/><path d="M447 662.96H455" stroke="#b4b4b4"/><path d="M443 669.73H455" stroke="#b4b4b4"/><path d="M447 676.49H455" stroke="#b4b4b4"/><path d="M444 683.26H455" stroke="#b4b4b4"/><path d="M447 690.02H455" stroke="#b4b4b4"/><path d="M444 696.79H455" stroke="#b4b4b4"/><path d="M447 703.55H455" stroke="#b4b4b4"/><path d="M444 710.32H455" stroke="#b4b4b4"/><path d="M447 717.08H455" stroke="#b4b4b4"/><path d="M430 723.85H455" stroke="#a8a8a8"/><path d="M447 730.62H455" stroke="#b4b4b4"/><path d="M444 737.38H455" stroke="#b4b4b4"/><path d="M447 744.15H455" stroke="#b4b4b4"/><path d="M444 750.91H455" stroke="#b4b4b4"/><path d="M447 757.68H455" stroke="#b4b4b4"/><path d="M444 764.44H455" stroke="#b4b4b4"/><path d="M447 771.21H455" stroke="#b4b4b4"/><path d="M443 777.98H455" stroke="#b4b4b4"/></g></svg><div class="rl vl" style="left:0.5px;top:51.8px">0</div><div class="rl vl" style="left:0px;top:98.12px">0.5</div><div class="rl vl" style="left:0.5px;top:160.05px">1</div><div class="rl vl" style="left:0px;top:206.38px">1.5</div><div class="rl vl" style="left:0.5px;top:268.3px">2</div><div class="rl vl" style="left:0px;top:314.63px">2.5</div><div class="rl vl" style="left:0.5px;top:376.55px">3</div><div class="rl vl" style="left:0px;top:422.88px">3.5</div><div class="rl vl" style="left:0.5px;top:484.8px">4</div><div class="rl vl" style="left:0px;top:531.12px">4.5</div><div class="rl vl" style="left:0.5px;top:593.05px">5</div><div class="abs" style="left:0;top:639.38px;width:24px;height:4.83px;overflow:hidden"><div class="rl vl" style="left:0;top:0">5.5</div></div><svg style="left:9.500px;top:155.9px" width="11" height="12" viewBox="0 0 11 12"><path d="M0 0v10.600L10.400 5.300z" fill="#f00013"/></svg></div><div class="abs" style="left:430px;top:447px;width:13px;height:78px;border-radius:0 13px 13px 0/0 16px 16px 0;background:linear-gradient(to right,#0b0920 0%,#4e5054 50%,#1f5a8c 100%)"></div><svg style="left:431px;top:479px" width="9" height="14" viewBox="0 0 9 14"><path d="M6.800 2L1.800 7 6.800 12" fill="none" stroke="#fff" stroke-width="1.200" stroke-linecap="round" stroke-linejoin="round"/></svg><div id="cv"><div class="abs" style="left:273px;top:49px;width:919px;height:595px;background:#fff;border:1px solid #c6c6c6;box-shadow:0 0 18px 2px rgba(0,0,0,.125)"></div><svg style="left:0;top:0" width="1465" height="694" viewBox="455 134 1465 694"><path d="M764.05 214.5L1612 214.5" fill="none" stroke="#e8404c" stroke-width="2.1" stroke-dasharray="16.9 21.1" stroke-linecap="round"/><path d="M1612 215.55L1612 746.5" fill="none" stroke="#e8404c" stroke-width="2.1" stroke-dasharray="16.9 21.1" stroke-linecap="round"/><path d="M764.05 746.5L1612 746.5" fill="none" stroke="#e8404c" stroke-width="2.1" stroke-dasharray="16.9 21.1" stroke-linecap="round"/><path d="M763 215.55L763 746.5" fill="none" stroke="#e8404c" stroke-width="2.1" stroke-dasharray="16.9 21.1" stroke-linecap="round"/><path d="M763 214.5h.01" stroke="#e8404c" stroke-width="2.1" stroke-linecap="square"/><path d="M798.85 245L1577.8 245" fill="none" stroke="#2f7d32" stroke-width="2.7" stroke-dasharray="16.3 21.7" stroke-linecap="round"/><path d="M1577.8 246.35L1577.8 716" fill="none" stroke="#2f7d32" stroke-width="2.7" stroke-dasharray="16.3 21.7" stroke-linecap="round"/><path d="M798.85 716L1577.8 716" fill="none" stroke="#2f7d32" stroke-width="2.7" stroke-dasharray="16.3 21.7" stroke-linecap="round"/><path d="M797.5 246.35L797.5 716" fill="none" stroke="#2f7d32" stroke-width="2.7" stroke-dasharray="16.3 21.7" stroke-linecap="round"/><path d="M797.5 245h.01" stroke="#2f7d32" stroke-width="2.7" stroke-linecap="square"/><g fill="none" stroke="#d8101e" stroke-width="1.300" stroke-linecap="round"><circle cx="747.700" cy="210.100" r="2.700"/><circle cx="747.700" cy="219.500" r="2.700"/><path d="M749.800 212L761.500 220.500M749.800 217.800L761.500 209.300"/></g><path d="M893.600 716V799" stroke="#1d5e1d" stroke-width="1.100" stroke-dasharray="5 3"/><circle cx="893.600" cy="715.600" r="3.600" fill="#175a17"/><path d="M1559.300 777V794.500" stroke="#222" stroke-width="1.200"/><circle cx="1559.300" cy="777.300" r="4" fill="#222"/></svg><div class="tag" id="tagz" style="font-size:12.850px;left:380px;top:665px;width:118px;height:19px;line-height:19px">Zone de sécurité</div><div class="tag" id="tagl" style="font-size:12.600px;left:1050px;top:660px;width:108px;height:19px;line-height:20.600px">Ligne de purge</div></div><div id="bot"></div><svg style="left:1128px;top:813px" width="94" height="17" viewBox="0 0 94 17"><path d="M7.600 16.200c0-7.400 4-14.400 12-14.400h54.800c8 0 12 7 12 14.400" fill="#fff" stroke="#dedede" stroke-width="1"/><rect x="8.200" y="15.400" width="77.600" height="2" fill="#fff"/><path d="M41.600 6.200l5.200 5 5.200-5" fill="none" stroke="#222" stroke-width="1.300" stroke-linecap="round" stroke-linejoin="round"/></svg><div class="abs" style="left:1106px;top:835px;width:65px;height:50px;border:2.500px solid #1d5079;border-radius:6px;background:#fff"></div><div class="abs" style="left:1179px;top:835px;width:65px;height:50px;border:1px solid #c9c9c9;border-radius:6px;background:#fff"></div><div class="t" id="fav" style="left:1106px;top:889.68px;font-size:12.45px;font-weight:bold;color:#235d8f;">Face ava...</div><div class="t" id="far" style="left:1179.3px;top:889.66px;font-size:12.6px;font-weight:bold;color:#1f1f1f;">Face arri...</div><div class="abs" style="left:434px;top:873px;width:283px;height:31px;background:#f4f4f4;border-radius:6px 6px 0 0"></div><svg style="left:445px;top:876px" width="24" height="24" viewBox="0 0 24 24"><g fill="none" stroke="#555" stroke-width="1.500" stroke-linecap="round"><circle cx="14" cy="9.900" r="6.800"/><path d="M9.200 14.900L3 20.800M11 9.900h6"/></g></svg><div class="abs" style="left:483px;top:885.300px;width:129px;height:6px;border-radius:3px;background:#1f5b91"></div><div class="abs" style="left:569.800px;top:881px;width:14.600px;height:14.600px;border-radius:50%;background:#fff;border:1px solid #222"></div><svg style="left:626px;top:876px" width="24" height="24" viewBox="0 0 24 24"><g fill="none" stroke="#555" stroke-width="1.500" stroke-linecap="round"><circle cx="10.900" cy="9.900" r="6.800"/><path d="M15.800 14.900L21.900 20.800M7.400 9.900h7M10.900 6.400v7"/></g></svg><div class="t" id="z381" style="left:670.7px;top:882.39px;font-size:12.4px;-webkit-text-stroke:.45px #222;color:#222;">381</div><svg style="left:697.200px;top:885px" width="9.600" height="5.200" viewBox="0 0 10 6"><path d="M0 0h10L5 5.400z" fill="#8a8a8a"/></svg><div id="fade"></div></body></html>
